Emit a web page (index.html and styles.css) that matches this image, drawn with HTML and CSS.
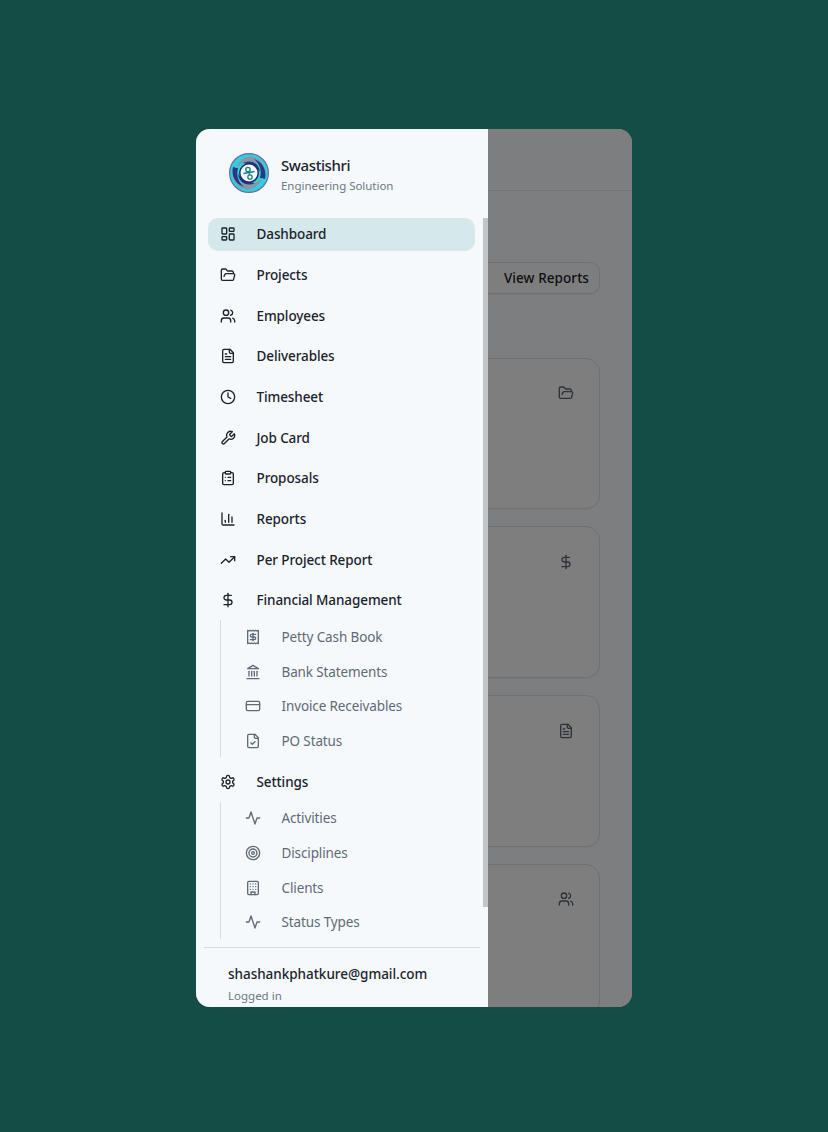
FILE: index.html
```html
<!DOCTYPE html>
<html lang="en">
<head>
    <meta charset="UTF-8">
    <meta name="viewport" content="width=device-width, initial-scale=1.0">
    <title>Swastishri</title>
    <link rel="stylesheet" href="styles.css">
</head>
<body>
    <svg class="icon-defs" width="0" height="0">
        <symbol id="i-dashboard" viewBox="0 0 24 24"><rect x="3" y="3" width="7" height="9" rx="1"/><rect x="14" y="3" width="7" height="5" rx="1"/><rect x="14" y="12" width="7" height="9" rx="1"/><rect x="3" y="16" width="7" height="5" rx="1"/></symbol>
        <symbol id="i-folder" viewBox="0 0 24 24"><path d="m6 14 1.5-2.9A2 2 0 0 1 9.24 10H20a2 2 0 0 1 1.94 2.5l-1.54 6a2 2 0 0 1-1.95 1.5H4a2 2 0 0 1-2-2V5a2 2 0 0 1 2-2h3.9a2 2 0 0 1 1.69.9l.81 1.2a2 2 0 0 0 1.67.9H18a2 2 0 0 1 2 2v2"/></symbol>
        <symbol id="i-users" viewBox="0 0 24 24"><path d="M16 21v-2a4 4 0 0 0-4-4H6a4 4 0 0 0-4 4v2"/><circle cx="9" cy="7" r="4"/><path d="M22 21v-2a4 4 0 0 0-3-3.87"/><path d="M16 3.13a4 4 0 0 1 0 7.75"/></symbol>
        <symbol id="i-file" viewBox="0 0 24 24"><path d="M15 2H6a2 2 0 0 0-2 2v16a2 2 0 0 0 2 2h12a2 2 0 0 0 2-2V7Z"/><path d="M14 2v4a2 2 0 0 0 2 2h4"/><path d="M10 9H8"/><path d="M16 13H8"/><path d="M16 17H8"/></symbol>
        <symbol id="i-clock" viewBox="0 0 24 24"><circle cx="12" cy="12" r="10"/><polyline points="12 6 12 12 16 14"/></symbol>
        <symbol id="i-wrench" viewBox="0 0 24 24"><path d="M14.7 6.3a1 1 0 0 0 0 1.4l1.6 1.6a1 1 0 0 0 1.4 0l3.77-3.77a6 6 0 0 1-7.94 7.94l-6.91 6.91a2.12 2.12 0 0 1-3-3l6.91-6.91a6 6 0 0 1 7.94-7.94l-3.76 3.76z"/></symbol>
        <symbol id="i-clipboard" viewBox="0 0 24 24"><rect x="8" y="2" width="8" height="4" rx="1"/><path d="M16 4h2a2 2 0 0 1 2 2v14a2 2 0 0 1-2 2H6a2 2 0 0 1-2-2V6a2 2 0 0 1 2-2h2"/><path d="M12 11h4"/><path d="M12 16h4"/><path d="M8 11h.01"/><path d="M8 16h.01"/></symbol>
        <symbol id="i-chart" viewBox="0 0 24 24"><path d="M3 3v16a2 2 0 0 0 2 2h16"/><path d="M18 17V9"/><path d="M13 17V5"/><path d="M8 17v-3"/></symbol>
        <symbol id="i-trending" viewBox="0 0 24 24"><polyline points="22 7 13.5 15.5 8.5 10.5 2 17"/><polyline points="16 7 22 7 22 13"/></symbol>
        <symbol id="i-dollar" viewBox="0 0 24 24"><line x1="12" y1="2" x2="12" y2="22"/><path d="M17 5H9.5a3.5 3.5 0 0 0 0 7h5a3.5 3.5 0 0 1 0 7H6"/></symbol>
        <symbol id="i-receipt" viewBox="0 0 24 24"><path d="M4 2v20l2-1 2 1 2-1 2 1 2-1 2 1 2-1 2 1V2l-2 1-2-1-2 1-2-1-2 1-2-1-2 1Z"/><path d="M16 8h-6a2 2 0 1 0 0 4h4a2 2 0 1 1 0 4H8"/><path d="M12 17.5v-11"/></symbol>
        <symbol id="i-landmark" viewBox="0 0 24 24"><line x1="3" y1="22" x2="21" y2="22"/><line x1="6" y1="18" x2="6" y2="11"/><line x1="10" y1="18" x2="10" y2="11"/><line x1="14" y1="18" x2="14" y2="11"/><line x1="18" y1="18" x2="18" y2="11"/><polygon points="12 2 20 7 4 7"/></symbol>
        <symbol id="i-card" viewBox="0 0 24 24"><rect x="2" y="5" width="20" height="14" rx="2"/><line x1="2" y1="10" x2="22" y2="10"/></symbol>
        <symbol id="i-file-check" viewBox="0 0 24 24"><path d="M15 2H6a2 2 0 0 0-2 2v16a2 2 0 0 0 2 2h12a2 2 0 0 0 2-2V7Z"/><path d="M14 2v4a2 2 0 0 0 2 2h4"/><path d="m9 15 2 2 4-4"/></symbol>
        <symbol id="i-settings" viewBox="0 0 24 24"><path d="M12.22 2h-.44a2 2 0 0 0-2 2v.18a2 2 0 0 1-1 1.73l-.43.25a2 2 0 0 1-2 0l-.15-.08a2 2 0 0 0-2.73.73l-.22.38a2 2 0 0 0 .73 2.73l.15.1a2 2 0 0 1 1 1.72v.51a2 2 0 0 1-1 1.74l-.15.09a2 2 0 0 0-.73 2.73l.22.38a2 2 0 0 0 2.73.73l.15-.08a2 2 0 0 1 2 0l.43.25a2 2 0 0 1 1 1.73V20a2 2 0 0 0 2 2h.44a2 2 0 0 0 2-2v-.18a2 2 0 0 1 1-1.73l.43-.25a2 2 0 0 1 2 0l.15.08a2 2 0 0 0 2.73-.73l.22-.39a2 2 0 0 0-.73-2.73l-.15-.08a2 2 0 0 1-1-1.74v-.5a2 2 0 0 1 1-1.74l.15-.09a2 2 0 0 0 .73-2.73l-.22-.38a2 2 0 0 0-2.73-.73l-.15.08a2 2 0 0 1-2 0l-.43-.25a2 2 0 0 1-1-1.73V4a2 2 0 0 0-2-2z"/><circle cx="12" cy="12" r="3"/></symbol>
        <symbol id="i-activity" viewBox="0 0 24 24"><path d="M22 12h-4l-3 9L9 3l-3 9H2"/></symbol>
        <symbol id="i-target" viewBox="0 0 24 24"><circle cx="12" cy="12" r="10"/><circle cx="12" cy="12" r="6"/><circle cx="12" cy="12" r="2"/></symbol>
        <symbol id="i-building" viewBox="0 0 24 24"><rect x="4" y="2" width="16" height="20" rx="2"/><path d="M9 22v-4h6v4"/><path d="M8 6h.01"/><path d="M16 6h.01"/><path d="M12 6h.01"/><path d="M12 10h.01"/><path d="M12 14h.01"/><path d="M16 10h.01"/><path d="M16 14h.01"/><path d="M8 10h.01"/><path d="M8 14h.01"/></symbol>
    </svg>

    <div class="frame">
        <main class="main">
            <div class="topbar"></div>
            <div class="content">
                <div class="toolbar">
                    <button class="btn" type="button">View Reports</button>
                </div>
                <div class="cards">
                    <div class="card"><svg class="icon"><use href="#i-folder"/></svg></div>
                    <div class="card"><svg class="icon"><use href="#i-dollar"/></svg></div>
                    <div class="card"><svg class="icon"><use href="#i-file"/></svg></div>
                    <div class="card"><svg class="icon"><use href="#i-users"/></svg></div>
                </div>
            </div>
        </main>
        <div class="overlay"></div>

        <aside class="sidebar">
            <div class="brand">
                <svg class="logo" viewBox="0 0 40 40">
                    <circle cx="20" cy="20" r="19.4" fill="#2fd0dc" stroke="#6f6aa8" stroke-width="1.2"/>
                    <g fill="#8e93a6">
                        <path d="M20 3.5A16.5 16.5 0 0 1 36.5 20C34 13 28 8.5 20 8.5 14 8.5 9 12 7 17 8 10 13 5 20 3.5Z"/>
                        <path d="M20 36.5A16.5 16.5 0 0 1 3.5 20C6 27 12 31.500 20 31.500 26 31.500 31 28 33 23 32 30 27 35 20 36.5Z"/>
                    </g>
                    <g fill="#2b3580">
                        <path d="M4 14C2 22 6 31 15 34 9 29 7 22 9 15 7 15 5.500 14.500 4 14Z"/>
                        <path d="M36 26C38 18 34 9 25 6 31 11 33 18 31 25 33 25 34.500 25.500 36 26Z"/>
                        <path d="M14 10C22 6 30 10 31 19 27 13 21 11 14 10Z"/>
                        <path d="M26 30C18 34 10 30 9 21 13 27 19 29 26 30Z"/>
                    </g>
                    <circle cx="20" cy="20" r="10" fill="#1f2a6e"/>
                    <circle cx="20" cy="20" r="8.500" fill="#f5f9fb"/>
                    <g fill="none" stroke="#17808c" stroke-width="1.3">
                        <circle cx="19" cy="16.500" r="2.200"/>
                        <circle cx="21" cy="24" r="2.200"/>
                        <path d="M14.500 20.500 25.500 18.500"/>
                        <path d="M19.500 18.700 20.700 21.800"/>
                    </g>
                </svg>
                <div class="brand-text">
                    <div class="brand-name">Swastishri</div>
                    <div class="brand-sub">Engineering Solution</div>
                </div>
            </div>

            <nav class="nav">
                <a class="nav-item active"><svg class="icon"><use href="#i-dashboard"/></svg>Dashboard</a>
                <a class="nav-item"><svg class="icon"><use href="#i-folder"/></svg>Projects</a>
                <a class="nav-item"><svg class="icon"><use href="#i-users"/></svg>Employees</a>
                <a class="nav-item"><svg class="icon"><use href="#i-file"/></svg>Deliverables</a>
                <a class="nav-item"><svg class="icon"><use href="#i-clock"/></svg>Timesheet</a>
                <a class="nav-item"><svg class="icon"><use href="#i-wrench"/></svg>Job Card</a>
                <a class="nav-item"><svg class="icon"><use href="#i-clipboard"/></svg>Proposals</a>
                <a class="nav-item"><svg class="icon"><use href="#i-chart"/></svg>Reports</a>
                <a class="nav-item"><svg class="icon"><use href="#i-trending"/></svg>Per Project Report</a>
                <a class="nav-item"><svg class="icon"><use href="#i-dollar"/></svg>Financial Management</a>
                <div class="sub-nav">
                    <a class="sub-item"><svg class="icon"><use href="#i-receipt"/></svg>Petty Cash Book</a>
                    <a class="sub-item"><svg class="icon"><use href="#i-landmark"/></svg>Bank Statements</a>
                    <a class="sub-item"><svg class="icon"><use href="#i-card"/></svg>Invoice Receivables</a>
                    <a class="sub-item"><svg class="icon"><use href="#i-file-check"/></svg>PO Status</a>
                </div>
                <a class="nav-item"><svg class="icon"><use href="#i-settings"/></svg>Settings</a>
                <div class="sub-nav">
                    <a class="sub-item"><svg class="icon"><use href="#i-activity"/></svg>Activities</a>
                    <a class="sub-item"><svg class="icon"><use href="#i-target"/></svg>Disciplines</a>
                    <a class="sub-item"><svg class="icon"><use href="#i-building"/></svg>Clients</a>
                    <a class="sub-item"><svg class="icon"><use href="#i-activity"/></svg>Status Types</a>
                </div>
                <div class="scroll-thumb"></div>
            </nav>

            <div class="account">
                <div class="account-email">shashankphatkure@gmail.com</div>
                <div class="account-status">Logged in</div>
            </div>
        </aside>
    </div>
</body>
</html>
```

FILE: styles.css
```css
* {
    box-sizing: border-box;
}
body {
    margin: 0;
    height: 1132px;
    padding-top: 129px;
    background-color: #144c46;
    font-family: "Noto Sans", Arial, sans-serif;
    color: #1a232c;
    overflow: hidden;
}
.icon-defs {
    position: absolute;
}
.icon {
    width: 16px;
    height: 16px;
    flex: none;
    fill: none;
    stroke: currentColor;
    stroke-width: 2;
    stroke-linecap: round;
    stroke-linejoin: round;
}
.frame {
    position: relative;
    width: 436px;
    height: 878px;
    margin: 0 auto;
    border-radius: 14px;
    overflow: hidden;
    background: #fbfdff;
}
.main {
    height: 100%;
}
.topbar {
    height: 62px;
    border-bottom: 1px solid #e3e6e9;
}
.content {
    padding: 71px 32px 0;
}
.toolbar {
    display: flex;
    justify-content: flex-end;
}
.btn {
    width: 160px;
    height: 32px;
    padding: 0 10px;
    text-align: right;
    font: 500 13.5px "Noto Sans", Arial, sans-serif;
    letter-spacing: 0.07px;
    color: #1a232c;
    background: #fdfdfd;
    border: 1px solid #dfe3e7;
    border-radius: 10px;
    box-shadow: 0 1px 2px rgba(0, 0, 0, 0.05);
}
.cards {
    display: flex;
    flex-direction: column;
    gap: 17px;
    margin-top: 63.5px;
}
.card {
    display: flex;
    justify-content: flex-end;
    height: 151.8px;
    padding: 26.5px 25px;
    background: #fdfdfd;
    border: 1px solid #dfe3e7;
    border-radius: 14px;
    box-shadow: 0 1px 2px rgba(0, 0, 0, 0.05);
    color: #5a6570;
}
.overlay {
    position: absolute;
    inset: 0;
    background: rgba(0, 0, 0, 0.5);
}
.sidebar {
    position: absolute;
    top: 0;
    bottom: 0;
    left: 0;
    width: 292px;
    display: flex;
    flex-direction: column;
    background: #f5f9fc;
}
.brand {
    display: flex;
    align-items: center;
    gap: 12px;
    height: 89px;
    flex: none;
    padding: 0 0 2px 33px;
}
.logo {
    width: 40px;
    height: 40px;
    flex: none;
}
.brand-text {
    padding-top: 5px;
}
.brand-name {
    font-size: 15px;
    font-weight: 500;
    letter-spacing: -0.4px;
    line-height: 22px;
}
.brand-sub {
    font-size: 11.5px;
    letter-spacing: -0.03px;
    line-height: 20px;
    color: #6c7883;
}
.nav {
    position: relative;
    height: 721px;
    flex: none;
    padding: 0 13px 0 12px;
    overflow: hidden;
}
.scroll-thumb {
    position: absolute;
    top: 0;
    right: 0;
    width: 5px;
    height: 689px;
    background: #c2c5c8;
}
.nav-item {
    display: flex;
    align-items: center;
    gap: 20.5px;
    height: 32.5px;
    margin-bottom: 8.17px;
    padding: 0 12px;
    border-radius: 10px;
    font-size: 13.5px;
    font-weight: 500;
    letter-spacing: -0.1px;
}
.nav-item.active {
    background: #d5e8ea;
}
.sub-nav {
    height: 137px;
    margin: -4.3px 0 8px 12px;
    padding: 0 0 0 24px;
    border-left: 1px solid #d6dde2;
}
.sub-item {
    display: flex;
    align-items: center;
    gap: 20.5px;
    height: 34.67px;
    padding-bottom: 1px;
    font-size: 13.5px;
    letter-spacing: -0.12px;
    color: #5f6a75;
}
.account {
    margin: 8px 8px 0;
    padding: 14px 24px 0;
    border-top: 1px solid #d6dde2;
    flex: none;
}
.account-email {
    font-size: 13.5px;
    font-weight: 500;
    letter-spacing: -0.03px;
    line-height: 24px;
}
.account-status {
    font-size: 11.5px;
    line-height: 20px;
    color: #6c7883;
}
```
